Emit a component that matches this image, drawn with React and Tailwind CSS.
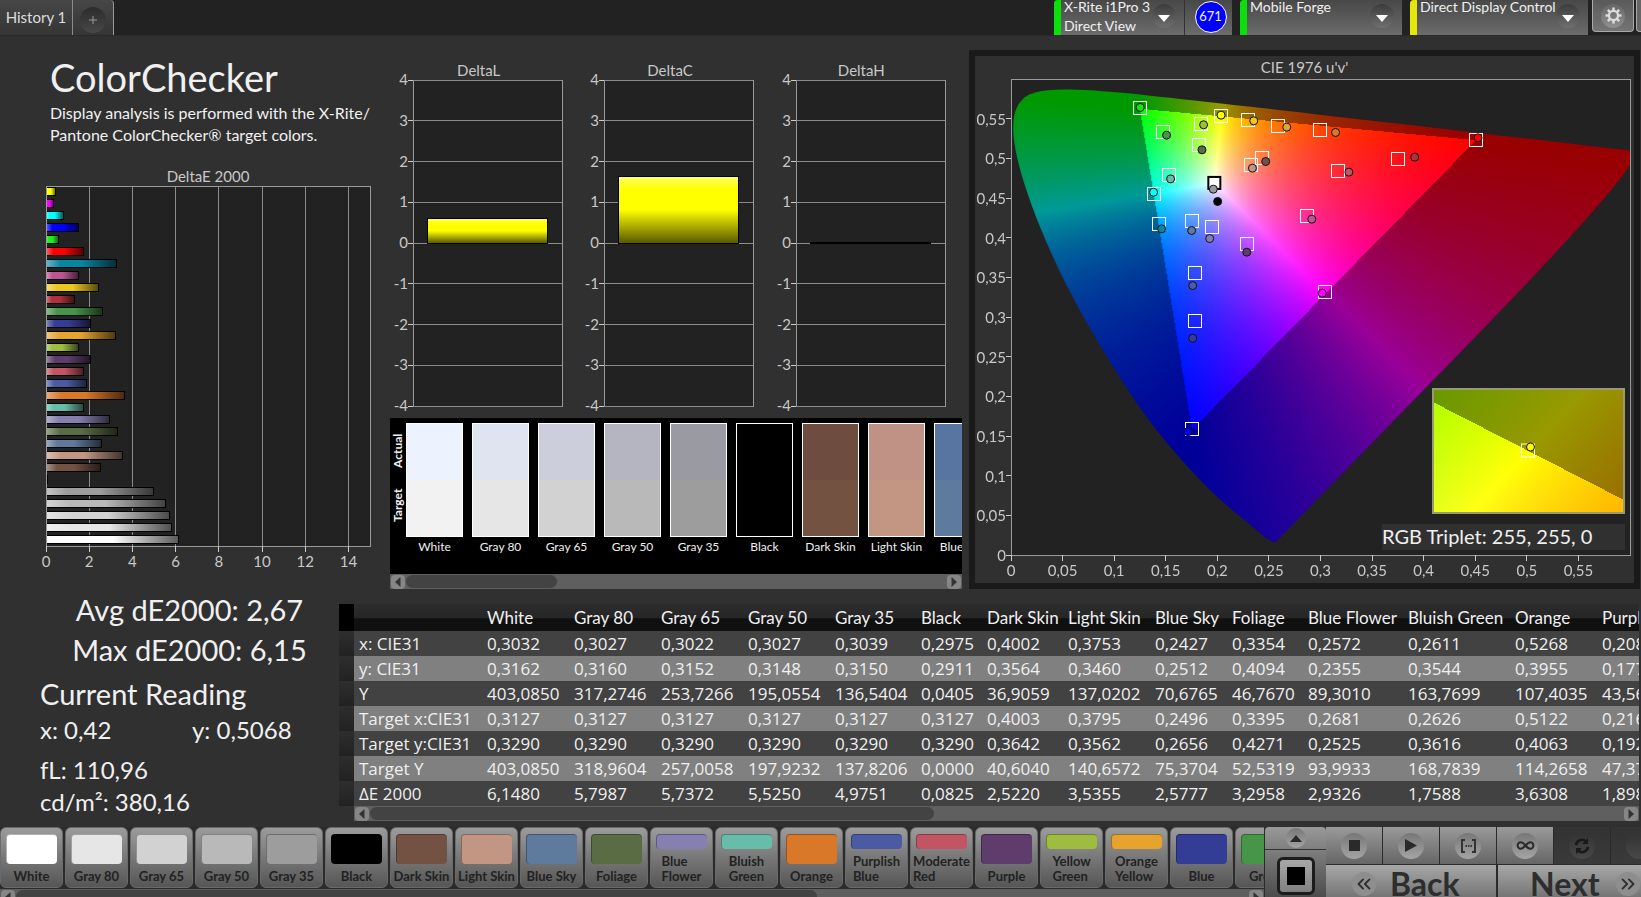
import React, { useLayoutEffect, useRef } from 'react'
import clsx from 'clsx'
import { ChevronsLeft, ChevronsRight, Infinity as InfinityIcon } from 'lucide-react'

const PATCHES = [
    { name: 'White', color: '#ffffff', actual: '#edf2ff', target: '#f2f2f2', dE: 6.148 },
    { name: 'Gray 80', color: '#e6e6e6', actual: '#e0e4f0', target: '#e6e6e6', dE: 5.7987 },
    { name: 'Gray 65', color: '#d2d2d2', actual: '#cccedb', target: '#d2d2d2', dE: 5.7372 },
    { name: 'Gray 50', color: '#b9b9b9', actual: '#b5b5c1', target: '#b9b9b9', dE: 5.525 },
    { name: 'Gray 35', color: '#9d9d9d', actual: '#9a9aa3', target: '#9d9d9d', dE: 4.9751 },
    { name: 'Black', color: '#000000', actual: '#000000', target: '#000000', dE: 0.0825 },
    { name: 'Dark Skin', color: '#735244', actual: '#6e4c40', target: '#735242', dE: 2.522 },
    { name: 'Light Skin', color: '#c29682', actual: '#c09185', target: '#c29682', dE: 3.5355 },
    { name: 'Blue Sky', color: '#5e7a9c', actual: '#5874a0', target: '#5e7a9c', dE: 2.5777 },
    { name: 'Foliage', color: '#5a6c43', dE: 3.2958 },
    { name: 'Blue Flower', color: '#8580b1', dE: 2.9326, wrap: true },
    { name: 'Bluish Green', color: '#67bdaa', dE: 1.7588, wrap: true },
    { name: 'Orange', color: '#d97829', dE: 3.6308 },
    { name: 'Purplish Blue', color: '#4a5ba4', dE: 1.898, wrap: true },
    { name: 'Moderate Red', color: '#c35463', dE: 1.75, wrap: true },
    { name: 'Purple', color: '#5e3c6c', dE: 2.05 },
    { name: 'Yellow Green', color: '#9fbc40', dE: 1.5, wrap: true },
    { name: 'Orange Yellow', color: '#e6a32e', dE: 3.2, wrap: true },
    { name: 'Blue', color: '#343d96', dE: 2.05 },
    { name: 'Green', color: '#479549', dE: 2.6 },
    { name: 'Red', color: '#b0313b', dE: 1.3 },
    { name: 'Yellow', color: '#edc821', dE: 2.45 },
    { name: 'Magenta', color: '#bc5495', dE: 1.52 },
    { name: 'Cyan', color: '#0887a2', dE: 3.25 },
    { name: '100% Red', color: '#ff0000', dE: 1.72 },
    { name: '100% Green', color: '#1cf01c', dE: 0.6 },
    { name: '100% Blue', color: '#0000ff', dE: 1.5 },
    { name: '100% Cyan', color: '#00ffff', dE: 0.8 },
    { name: '100% Magenta', color: '#ff00ff', dE: 0.36 },
    { name: '100% Yellow', color: '#ffff00', dE: 0.45 },
]

const TABLE_COLUMNS = [
    { name: 'White', width: 87, values: ['0,3032', '0,3162', '403,0850', '0,3127', '0,3290', '403,0850', '6,1480'] },
    { name: 'Gray 80', width: 87, values: ['0,3027', '0,3160', '317,2746', '0,3127', '0,3290', '318,9604', '5,7987'] },
    { name: 'Gray 65', width: 87, values: ['0,3022', '0,3152', '253,7266', '0,3127', '0,3290', '257,0058', '5,7372'] },
    { name: 'Gray 50', width: 87, values: ['0,3027', '0,3148', '195,0554', '0,3127', '0,3290', '197,9232', '5,5250'] },
    { name: 'Gray 35', width: 86, values: ['0,3039', '0,3150', '136,5404', '0,3127', '0,3290', '137,8206', '4,9751'] },
    { name: 'Black', width: 66, values: ['0,2975', '0,2911', '0,0405', '0,3127', '0,3290', '0,0000', '0,0825'] },
    { name: 'Dark Skin', width: 81, values: ['0,4002', '0,3564', '36,9059', '0,4003', '0,3642', '40,6040', '2,5220'] },
    { name: 'Light Skin', width: 87, values: ['0,3753', '0,3460', '137,0202', '0,3795', '0,3562', '140,6572', '3,5355'] },
    { name: 'Blue Sky', width: 77, values: ['0,2427', '0,2512', '70,6765', '0,2496', '0,2656', '75,3704', '2,5777'] },
    { name: 'Foliage', width: 76, values: ['0,3354', '0,4094', '46,7670', '0,3395', '0,4271', '52,5319', '3,2958'] },
    { name: 'Blue Flower', width: 100, values: ['0,2572', '0,2355', '89,3010', '0,2681', '0,2525', '93,9933', '2,9326'] },
    { name: 'Bluish Green', width: 107, values: ['0,2611', '0,3544', '163,7699', '0,2626', '0,3616', '168,7839', '1,7588'] },
    { name: 'Orange', width: 87, values: ['0,5268', '0,3955', '107,4035', '0,5122', '0,4063', '114,2658', '3,6308'] },
    { name: 'Purplish Blue', width: 107, values: ['0,2083', '0,1772', '43,5610', '0,2162', '0,1921', '47,3720', '1,8980'] },
]

const ROW_LABELS = ['x: CIE31', 'y: CIE31', 'Y', 'Target x:CIE31', 'Target y:CIE31', 'Target Y', 'ΔE 2000']

// u'v' target, u'v' measured, fill
const MARKERS = [
    [0.1243, 0.564, 0.1252, 0.5641, '#0bea0b'],
    [0.2032, 0.5544, 0.2036, 0.5544, '#ffff00'],
    [0.1841, 0.5439, 0.1867, 0.5423, '#9fbc40'],
    [0.1469, 0.5343, 0.1508, 0.5292, '#479549'],
    [0.1816, 0.5179, 0.1851, 0.5107, '#5a6c43'],
    [0.2288, 0.5494, 0.2353, 0.5473, '#edc821'],
    [0.2579, 0.541, 0.2673, 0.5393, '#e6a32e'],
    [0.2987, 0.5359, 0.3146, 0.5326, '#d97829'],
    [0.2424, 0.501, 0.2469, 0.496, '#735244'],
    [0.2324, 0.4926, 0.234, 0.4876, '#c29682'],
    [0.1531, 0.4796, 0.1547, 0.4741, '#67bdaa'],
    [0.1382, 0.4561, 0.1382, 0.4573, '#00ffff'],
    [0.143, 0.4182, 0.146, 0.4111, '#0887a2'],
    [0.1751, 0.4216, 0.1751, 0.409, '#5e7a9c'],
    [0.1942, 0.4145, 0.1926, 0.3989, '#8580b1'],
    [0.2278, 0.393, 0.2285, 0.3817, '#5e3c6c'],
    [0.2864, 0.4279, 0.2916, 0.4233, '#bc5495'],
    [0.3168, 0.4842, 0.3275, 0.4826, '#c35463'],
    [0.1777, 0.3564, 0.1761, 0.3396, '#4a5ba4'],
    [0.1777, 0.2955, 0.1761, 0.2732, '#343d96'],
    [0.3042, 0.3317, 0.3016, 0.33, '#ff00ff'],
    [0.4498, 0.5237, 0.4527, 0.5259, '#ff0000'],
    [0.3744, 0.4994, 0.3913, 0.5015, '#b0313b'],
    [0.1749, 0.1589, 0.1716, 0.1555, '#0000ff'],
]

// spectral locus, CIE 1931 xy
const LOCUS = [
    [0.1741, 0.005], [0.1733, 0.0048], [0.1714, 0.0051], [0.1689, 0.0069], [0.1644, 0.0109], [0.1566, 0.0177],
    [0.144, 0.0297], [0.1241, 0.0578], [0.1096, 0.0868], [0.0913, 0.1327], [0.0687, 0.2007], [0.0454, 0.295],
    [0.0235, 0.4127], [0.0082, 0.5384], [0.0039, 0.6548], [0.0139, 0.7502], [0.0389, 0.812], [0.0743, 0.8338],
    [0.1142, 0.8262], [0.1547, 0.8059], [0.1929, 0.7816], [0.2296, 0.7543], [0.3016, 0.6923], [0.3731, 0.6245],
    [0.4441, 0.5547], [0.5125, 0.4866], [0.5752, 0.4242], [0.627, 0.3725], [0.6915, 0.3083], [0.719, 0.2809],
    [0.7347, 0.2653],
]

const xyToRgb = (x, y) => {
    const X = x / y
    const Z = (1 - x - y) / y
    const rgb = [
        3.2406 * X - 1.5372 - 0.4986 * Z,
        -0.9689 * X + 1.8758 + 0.0415 * Z,
        0.0557 * X - 0.204 + 1.057 * Z,
    ]
    // anything outside the display gamut is dimmed
    const level = Math.min(...rgb) < 0 ? 153 : 255
    const max = Math.max(...rgb)
    return rgb.map((c) => level * (Math.max(c, 0) / max))
}

const uvToXy = (u, v) => {
    const d = 6 * u - 16 * v + 12
    return [(9 * u) / d, (4 * v) / d]
}

const pct = (n) => `${n * 100}%`

const Gamut = ({ width, height, toXy, locus, className }) => {
    const ref = useRef(null)

    useLayoutEffect(() => {
        const ctx = ref.current.getContext('2d')
        const image = ctx.createImageData(width, height)
        for (let j = 0; j < height; j++) {
            for (let i = 0; i < width; i++) {
                const [x, y] = toXy((i + 0.5) / width, 1 - (j + 0.5) / height)
                const [r, g, b] = xyToRgb(x, y)
                image.data.set([r, g, b, 255], (j * width + i) * 4)
            }
        }
        ctx.putImageData(image, 0, 0)
        if (locus) {
            const points = LOCUS.map(([x, y]) => {
                const d = -2 * x + 12 * y + 3
                return [((4 * x) / d / 0.6) * width, (1 - (9 * y) / d / 0.6) * height]
            })
            ctx.globalCompositeOperation = 'destination-in'
            ctx.beginPath()
            points.forEach(([x, y], i) => {
                const [nx, ny] = points[(i + 1) % points.length]
                ctx.quadraticCurveTo(x, y, (x + nx) / 2, (y + ny) / 2)
            })
            ctx.closePath()
            ctx.fill()
        }
    }, [])

    return <canvas ref={ref} width={width} height={height} className={className} />
}

const uvPlotToXy = (a, b) => uvToXy(a * 0.6, b * 0.6)
const insetToXy = (a, b) => [0.3943 + a * 0.05, 0.4803 + b * 0.05]

const ScrollBar = ({ thumb, className }) => (
    <div className={clsx('flex items-center h-[15px] bg-[#5f5f5f] px-px', className)}>
        <button aria-label="Scroll left" className="flex items-center justify-center w-3.5 h-3.5 rounded bg-[#868686] shrink-0">
            <svg width="6" height="10" viewBox="0 0 6 10"><path d="M5.500 0v10L0 5z" fill="#333" /></svg>
        </button>
        <div className="flex-1 h-[13px] mx-px">
            <div className="h-full rounded-full bg-[#434343]" style={{ width: thumb }} />
        </div>
        <button aria-label="Scroll right" className="flex items-center justify-center w-3.5 h-3.5 rounded bg-[#868686] shrink-0">
            <svg width="6" height="10" viewBox="0 0 6 10"><path d="M.5 0v10L6 5z" fill="#333" /></svg>
        </button>
    </div>
)

const DeviceSelect = ({ id, title, value, className, bar }) => (
    <div className={clsx('relative flex h-[35px] bg-linear-to-b from-[#484848] to-[#6c6c6c] overflow-hidden rounded-tl', className)}>
        <div className={clsx('w-[7px] shrink-0', bar)} />
        <div className="flex flex-col flex-1 pl-[3px] text-[14px] leading-[19px] -mt-[3px]">
            {title && <label htmlFor={id}>{title}</label>}
            <select id={id} aria-label={title ? undefined : value} className="appearance-none bg-transparent w-full outline-none">
                <option>{value}</option>
            </select>
        </div>
        <div className="absolute right-2 top-1 w-6 h-6 rounded-full bg-linear-to-b from-[#3c3c3c] to-[#707070] flex items-center justify-center pointer-events-none">
            <svg width="12" height="7" viewBox="0 0 12 7" className="mt-1"><path d="M0 0h12L6 7z" fill="#fff" /></svg>
        </div>
    </div>
)

const TopBar = () => (
    <header className="flex justify-between h-9 shrink-0 bg-[#222] border-b border-[#2a2a2a]">
        <div className="flex h-[35px]">
            <button className="w-[73px] border-r border-[#8a8a8a] bg-linear-to-b from-[#474747] to-[#353535] text-[15px] text-[#ddd]">History 1</button>
            <button aria-label="Add tab" className="flex items-center justify-center w-[41px] border-r border-[#999] rounded-tr bg-linear-to-b from-[#474747] to-[#353535]">
                <span className="flex items-center justify-center w-[26px] h-[26px] mt-1 rounded-full bg-linear-to-b from-[#2c2c2c] to-[#484848]">
                    <svg width="8" height="8" viewBox="0 0 8 8"><path d="M4 0v8M0 4h8" stroke="#999" /></svg>
                </span>
            </button>
        </div>
        <div className="flex">
            <DeviceSelect id="meter" title="X-Rite i1Pro 3" value="Direct View" className="w-[130px]" bar="bg-[#0be00b]" />
            <div className="flex justify-center w-12 h-[35px] mr-2 pl-1 border-l border-[#333] bg-linear-to-b from-[#484848] to-[#6c6c6c]">
                <div className="flex items-center justify-center w-8 h-8 mt-px rounded-full border border-white bg-[#0000ff] text-[13px]">671</div>
            </div>
            <DeviceSelect id="source" value="Mobile Forge" className="w-[162px] mr-2" bar="bg-[#0be00b]" />
            <DeviceSelect id="display" value="Direct Display Control" className="w-[178px] mr-1" bar="bg-[#e6e60a]" />
            <button aria-label="Settings" className="flex items-center justify-center w-[42px] h-8 mr-0.5 rounded-b border border-t-0 border-[#aaa] bg-linear-to-b from-[#5a5a5a] to-[#757575]">
                <span className="flex items-center justify-center w-6 h-6 rounded-full bg-linear-to-b from-[#666] to-[#909090]">
                    <svg width="17" height="17" viewBox="-9 -9 18 18" stroke="#ddd" fill="none">
                        <circle r="4.800" strokeWidth="2.400" />
                        {[0, 45, 90, 135, 180, 225, 270, 315].map((a) => (
                            <path key={a} d="M0 -5.500V-8.500" strokeWidth="2.600" transform={`rotate(${a})`} />
                        ))}
                    </svg>
                </span>
            </button>
            <div className="w-[5px] h-8 rounded-bl border-l border-b border-[#aaa] bg-[#666]" />
        </div>
    </header>
)

const BarShade = ({ id, vertical }) => (
    <linearGradient id={id} x1="0" y1="0" x2={vertical ? 0 : 1} y2={vertical ? 1 : 0}>
        <stop offset="0" stopColor="#fff" stopOpacity="0.4" />
        <stop offset="0.2" stopColor="#fff" stopOpacity="0" />
        <stop offset="0.5" stopColor="#000" stopOpacity="0" />
        <stop offset="1" stopColor="#000" stopOpacity="0.65" />
    </linearGradient>
)

const DeltaEChart = () => {
    const bars = [...PATCHES].reverse()
    return (
        <svg className="flex-1 min-h-0 w-full overflow-visible text-[15px]" fill="#c8c8c8">
            <defs><BarShade id="shade-x" /></defs>
            <rect width="100%" height="100%" fill="#222" />
            <g shapeRendering="crispEdges" stroke="#8c8c8c" strokeWidth="1">
                {[2, 4, 6, 8, 10, 12, 14].map((n) => (
                    <line key={n} x1={pct(n / 15)} x2={pct(n / 15)} y1="0" y2="100%" />
                ))}
            </g>
            {bars.map((bar, i) => (
                <g key={bar.name} shapeRendering="crispEdges">
                    <rect y={pct((i + 0.1) / 30)} width={pct(bar.dE / 15)} height="8" fill={bar.color} />
                    <rect y={pct((i + 0.1) / 30)} width={pct(bar.dE / 15)} height="8" fill="url(#shade-x)" stroke="#000" />
                </g>
            ))}
            <rect width="100%" height="100%" fill="none" stroke="#9a9a9a" shapeRendering="crispEdges" />
            {[0, 2, 4, 6, 8, 10, 12, 14].map((n) => (
                <svg key={n} x={pct(n / 15)} y="100%" className="overflow-visible">
                    <line y1="0" y2="6" stroke="#ccc" shapeRendering="crispEdges" />
                    <text y="21" textAnchor="middle">{n}</text>
                </svg>
            ))}
        </svg>
    )
}

const DeltaChart = ({ title, value }) => (
    <div className="flex flex-col min-w-0 text-[15px] text-[#c8c8c8]">
        <h3 className="text-center leading-5">{title}</h3>
        <div className="flex flex-1 min-h-0 pl-[18px]">
            <svg className="w-full h-full overflow-visible" fill="#c8c8c8">
                <defs><BarShade id="shade-y" vertical /></defs>
                <rect width="100%" height="100%" fill="#222" stroke="#9a9a9a" shapeRendering="crispEdges" />
                {[4, 3, 2, 1, 0, -1, -2, -3, -4].map((n) => (
                    <svg key={n} y={pct((4 - n) / 8)} className="overflow-visible">
                        <line x1="-5" x2="0" stroke="#ccc" shapeRendering="crispEdges" />
                        <line x1="0" x2="100%" stroke="#8c8c8c" shapeRendering="crispEdges" />
                        <text x="-5" y="5" textAnchor="end">{n}</text>
                    </svg>
                ))}
                <g shapeRendering="crispEdges">
                    <rect x="10%" y={pct((4 - value) / 8)} width="80%" height={pct(value / 8)} fill="#ffff00" />
                    <rect x="10%" y={pct((4 - value) / 8)} width="80%" height={pct(value / 8)} fill="url(#shade-y)" stroke="#000" />
                </g>
            </svg>
        </div>
    </div>
)

const SwatchPanel = () => (
    <div className="flex flex-col h-[171px] mr-[7px] bg-black">
        <div className="flex flex-1 overflow-hidden pt-[5px]">
            <div className="flex flex-col w-4 h-[114px] pb-1 shrink-0 text-[12px] leading-4 font-bold">
                <div className="flex-1 flex items-center justify-center rotate-180 [writing-mode:vertical-rl]">Actual</div>
                <div className="flex-1 flex items-center justify-center rotate-180 [writing-mode:vertical-rl]">Target</div>
            </div>
            <div className="flex gap-[9px]">
                {PATCHES.slice(0, 9).map((p) => (
                    <div key={p.name} className="w-[57px] shrink-0">
                        <div className="h-[114px] border border-white">
                            <div className="h-1/2" style={{ background: p.actual }} />
                            <div className="h-1/2" style={{ background: p.target }} />
                        </div>
                        <div className="text-center text-[12px] leading-5 whitespace-nowrap">{p.name}</div>
                    </div>
                ))}
            </div>
        </div>
        <ScrollBar thumb="28%" />
    </div>
)

const CieChart = () => (
    <section className="flex flex-col min-w-0 mt-3.5 mr-px border-[6px] border-[#1a1a1a] pr-1 pb-7 pl-9 text-[15px] text-[#c8c8c8]">
        <h3 className="-ml-8 text-center leading-[23px]">CIE 1976 u'v'</h3>
        <div className="relative flex-1 min-h-0 bg-[#222]">
            <Gamut width={618} height={476} toXy={uvPlotToXy} locus className="absolute inset-0 w-full h-full" />
            <svg className="absolute inset-0 w-full h-full overflow-visible" fill="#c8c8c8">
                <rect width="100%" height="100%" fill="none" stroke="#9a9a9a" shapeRendering="crispEdges" />
                {Array.from({ length: 12 }, (_, i) => {
                    const label = String(i * 5 / 100).replace('.', ',')
                    return (
                        <g key={i}>
                            <svg x={pct(i / 12)} y="100%" className="overflow-visible">
                                <line y2="6" stroke="#ccc" shapeRendering="crispEdges" />
                                <text y="21" textAnchor="middle">{label}</text>
                            </svg>
                            <svg y={pct(1 - i / 12)} className="overflow-visible">
                                <line x1="-5" x2="0" stroke="#ccc" shapeRendering="crispEdges" />
                                <text x="-5" y="6" textAnchor="end">{label}</text>
                            </svg>
                        </g>
                    )
                })}
                <svg x={pct(0.1971 / 0.6)} y={pct(1 - 0.469 / 0.6)} className="overflow-visible">
                    <rect x="-6" y="-6" width="12" height="12" fill="#fff" stroke="#000" strokeWidth="2" />
                </svg>
                {MARKERS.map(([u, v]) => (
                    <svg key={`${u}-${v}`} x={pct(u / 0.6)} y={pct(1 - v / 0.6)} className="overflow-visible">
                        <rect x="-6" y="-6" width="13" height="13" fill="none" stroke="#fff" strokeWidth="1" shapeRendering="crispEdges" />
                    </svg>
                ))}
                {[...MARKERS, [0, 0, 0.1961, 0.4611, '#999'], [0, 0, 0.2003, 0.4456, '#000']].map(([, , u, v, fill]) => (
                    <circle key={`${u}-${v}`} cx={pct(u / 0.6)} cy={pct(1 - v / 0.6)} r="4" fill={fill} stroke="#111" />
                ))}
            </svg>
            <div className="absolute right-[5px] bottom-[5px] flex flex-col items-end gap-2.5">
                <div className="relative w-[193px] h-[126px] border-2 border-[#9a9a70]">
                    <Gamut width={189} height={122} toXy={insetToXy} className="w-full h-full" />
                    <svg className="absolute inset-0 w-full h-full">
                        <svg x="50%" y="50%" className="overflow-visible">
                            <rect x="-7" y="-7" width="13" height="13" fill="none" stroke="#fff" />
                            <circle cx="2" cy="-4" r="4" fill="#ffff00" stroke="#111" />
                        </svg>
                    </svg>
                </div>
                <div className="w-[243px] h-[26px] bg-[#303030] text-[20px] leading-6 text-[#f0f0f0]">RGB Triplet: 255, 255, 0</div>
            </div>
        </div>
    </section>
)

const Readings = () => (
    <section className="w-[339px] shrink-0 pl-10 text-[24px] leading-8">
        <div className="text-center text-[29px] leading-10">
            <p>Avg dE2000: 2,67</p>
            <p>Max dE2000: 6,15</p>
        </div>
        <h2 className="mt-1 text-[29px] leading-10">Current Reading</h2>
        <div className="flex">
            <p className="w-[152px]">x: 0,42</p>
            <p>y: 0,5068</p>
        </div>
        <p className="mt-2">fL: 110,96</p>
        <p>cd/m²: 380,16</p>
    </section>
)

const ResultsTable = () => (
    <section className="flex-1 min-w-0 pt-3.5 pr-0.5">
        <div className="overflow-hidden">
            <table className="table-fixed w-max border-collapse text-left whitespace-nowrap">
                <colgroup>
                    <col className="w-[15px]" />
                    <col className="w-[128px]" />
                    {TABLE_COLUMNS.map((c) => <col key={c.name} style={{ width: c.width }} />)}
                </colgroup>
                <thead>
                    <tr className="h-[27px] text-[17px] leading-[27px]">
                        <td className="bg-black" />
                        <td className="bg-linear-to-b from-[#2c2c2c] from-0% via-[#262626] via-50% to-[#101010] to-55%" />
                        {TABLE_COLUMNS.map((c) => (
                            <th key={c.name} scope="col" className="p-0 pl-[5px] font-normal bg-linear-to-b from-[#2c2c2c] from-0% via-[#262626] via-50% to-[#101010] to-55%">{c.name}</th>
                        ))}
                    </tr>
                </thead>
                <tbody className="font-['Open_Sans',sans-serif] text-[17px]">
                    {ROW_LABELS.map((label, i) => (
                        <tr key={label} className="h-[25px] leading-[25px] odd:bg-[#424242] even:bg-[#808080]">
                            <td className="bg-linear-to-b from-[#2e2e2e] to-[#222]" />
                            <th scope="row" className="p-0 pl-[5px] font-normal">{label}</th>
                            {TABLE_COLUMNS.map((c) => <td key={c.name} className="p-0 pl-[5px]">{c.values[i]}</td>)}
                        </tr>
                    ))}
                </tbody>
            </table>
        </div>
        <ScrollBar thumb="45%" className="ml-[15px]" />
    </section>
)

const PatchButton = ({ patch }) => (
    <button className="flex flex-col items-center justify-between w-[63px] h-[61px] shrink-0 pt-1.5 pb-[3px] rounded-md border border-[#6a6a6a] bg-linear-to-b from-[#9c9c9c] to-[#565656] text-[#222] text-[13px] leading-[15px] font-bold">
        <span
            className={clsx('w-[51px] shrink-0 rounded border-t border-l border-black/30', patch.wrap ? 'h-[15px]' : 'h-[30px]')}
            style={{ backgroundColor: patch.color }}
        />
        <span className={clsx('text-left', patch.wrap ? 'w-min' : 'whitespace-nowrap')}>{patch.name}</span>
    </button>
)

const ToolButton = ({ label, dark, children }) => (
    <button
        aria-label={label}
        className={clsx(
            'flex items-center justify-center w-[56px] h-[37px] shrink-0 bg-linear-to-b',
            dark ? 'from-[#333] to-[#3a3a3a]' : 'from-[#9a9a9a] to-[#666]'
        )}
    >
        <span className={clsx('flex items-center justify-center w-[26px] h-[26px] rounded-full bg-linear-to-b', dark ? 'from-[#333] to-[#484848]' : 'from-[#777] to-[#a5a5a5]')}>
            {children}
        </span>
    </button>
)

const Footer = () => (
    <footer className="flex h-[70px] shrink-0 overflow-hidden bg-[#2b2b2b]">
        <div className="flex-1 min-w-0 flex flex-col">
            <div className="flex gap-0.5 h-[62px] shrink-0 overflow-hidden">
                {PATCHES.slice(0, 20).map((p) => <PatchButton key={p.name} patch={p} />)}
            </div>
            <ScrollBar thumb="65%" className="shrink-0" />
        </div>
        <div className="flex flex-col w-[61px] ml-px shrink-0 bg-linear-to-b from-[#999] to-[#4c4c4c] rounded-t">
            <button aria-label="Expand" className="flex items-center justify-center h-[23px] border-b border-[#333]">
                <span className="flex items-center justify-center w-5 h-5 rounded-full bg-linear-to-b from-[#777] to-[#a5a5a5]">
                    <svg width="12" height="7" viewBox="0 0 12 7"><path d="M0 7h12L6 0z" fill="#2a2a2a" /></svg>
                </span>
            </button>
            <button aria-label="Pattern window" className="flex items-center justify-center w-[38px] h-[38px] mt-[7px] mx-auto rounded-md border-[3px] border-[#1c1c1c] bg-linear-to-b from-[#a8a8a8] to-[#808080]">
                <span className="w-[18px] h-[18px] bg-black" />
            </button>
        </div>
        <div className="w-[315px] shrink-0 flex flex-col gap-px overflow-hidden">
            <div className="flex gap-px">
                <ToolButton label="Stop"><svg width="11" height="11"><rect width="11" height="11" fill="#2a2a2a" /></svg></ToolButton>
                <ToolButton label="Play"><svg width="12" height="13" viewBox="0 0 12 13"><path d="M0 0l12 6.500L0 13z" fill="#2a2a2a" /></svg></ToolButton>
                <ToolButton label="Measure range">
                    <svg width="17" height="14" viewBox="0 0 17 14" fill="none" stroke="#333" strokeWidth="2">
                        <path d="M5 1H2v12h3M12 1h3v12h-3M5.500 7h1.500M8 7h1.500M10.500 7H12" />
                    </svg>
                </ToolButton>
                <ToolButton label="Loop"><InfinityIcon size={19} color="#2a2a2a" strokeWidth={2.5} /></ToolButton>
                <ToolButton label="Repeat" dark>
                    <svg width="18" height="18" viewBox="0 0 18 18" fill="none" stroke="#191919" strokeWidth="2.500">
                        <path d="M3 8a6 6 0 0 1 10-3.500M15 10a6 6 0 0 1-10 3.500" />
                        <path d="M15 1v6H9zM3 17v-6h6z" fill="#191919" stroke="none" />
                    </svg>
                </ToolButton>
                <ToolButton label="More" dark />
            </div>
            <div className="flex gap-0.5 text-[32px] leading-[34px] font-bold text-[#2e2e2e]">
                <button className="flex items-center gap-3.5 w-[170px] h-[38px] pl-[26px] shrink-0 bg-linear-to-b from-[#a8a8a8] to-[#6c6c6c]">
                    <span className="flex items-center justify-center w-6 h-6 rounded-full bg-[#8e8e8e]"><ChevronsLeft size={22} /></span>
                    Back
                </button>
                <button className="flex items-center gap-4 w-[170px] h-[38px] pl-8 shrink-0 bg-linear-to-b from-[#a8a8a8] to-[#6c6c6c]">
                    Next
                    <span className="flex items-center justify-center w-6 h-6 rounded-full bg-[#8e8e8e]"><ChevronsRight size={22} /></span>
                </button>
            </div>
        </div>
    </footer>
)

const App = () => {
    return (
        <div className="flex flex-col h-screen overflow-hidden bg-[#303030] text-[#f0f0f0] font-['Lato',sans-serif]">
            <TopBar />

            <main className="flex-1 min-h-0 grid grid-cols-[390px_minmax(0,579fr)_minmax(0,672fr)] pb-px">
                <section className="flex flex-col min-h-0 pt-5 pb-[43px]">
                    <h1 className="pl-[50px] text-[38px] leading-[42px]">ColorChecker</h1>
                    <p className="pl-[50px] mt-1 text-[16px] leading-[22px] whitespace-nowrap">
                        Display analysis is performed with the X-Rite/<br />
                        Pantone ColorChecker® target colors.
                    </p>
                    <div className="flex flex-col flex-1 min-h-0 mt-5 pl-[46px] pr-5">
                        <h3 className="text-center text-[15px] leading-5 text-[#c8c8c8]">DeltaE 2000</h3>
                        <DeltaEChart />
                    </div>
                </section>

                <section className="flex flex-col min-w-0 min-h-0 pt-6">
                    <div className="grid grid-cols-3 gap-6 flex-1 min-h-0 pl-[5px] pr-6 pb-3">
                        <DeltaChart title="DeltaL" value={0.6} />
                        <DeltaChart title="DeltaC" value={1.64} />
                        <DeltaChart title="DeltaH" value={0.02} />
                    </div>
                    <SwatchPanel />
                </section>

                <CieChart />
            </main>

            <div className="flex shrink-0 h-[237px]">
                <Readings />
                <ResultsTable />
            </div>

            <Footer />
        </div>
    )
}

export default App
